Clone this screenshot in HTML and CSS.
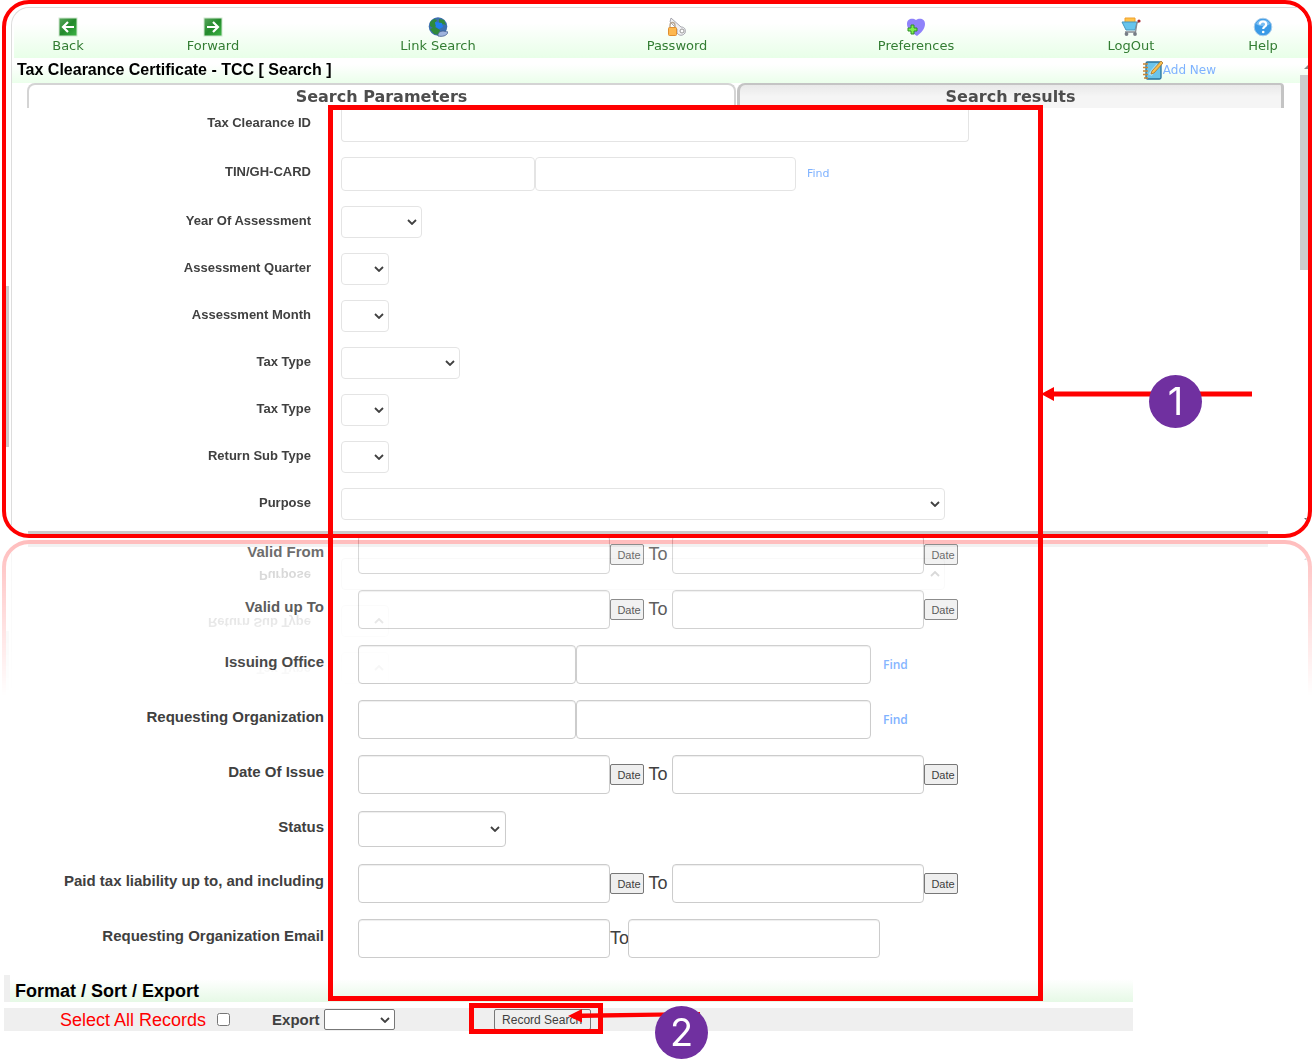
FILE: index.html
```html
<!DOCTYPE html>
<html lang="en">
<head>
<meta charset="utf-8">
<title>Tax Clearance Certificate - TCC</title>
<link rel="stylesheet" href="styles.css">
</head>
<body>
<div class="page">
  <main class="panel">
    <div class="window">
      <nav class="toolbar">
        <a href="#back">
          <svg viewBox="0 0 20 20"><defs><linearGradient id="g" x1="0" y1="0" x2="1" y2="1"><stop offset="0" stop-color="#5aa65e"/><stop offset=".5" stop-color="#238a2c"/><stop offset="1" stop-color="#3db545"/></linearGradient></defs><rect x="1" y="1" width="18" height="18" fill="url(#g)" stroke="#cfe8cf"/><path d="M16 10H5.500M10 5L5 10l5 5" fill="none" stroke="#fff" stroke-width="2.200"/></svg>
          <span>Back</span></a>
        <a href="#forward">
          <svg viewBox="0 0 20 20"><rect x="1" y="1" width="18" height="18" fill="url(#g)" stroke="#cfe8cf"/><path d="M4 10h10.500M10 5l5 5-5 5" fill="none" stroke="#fff" stroke-width="2.200"/></svg>
          <span>Forward</span></a>
        <a href="#links">
          <svg viewBox="0 0 20 20"><circle cx="10" cy="9.500" r="9.300" fill="#3c6fae"/><path d="M2 5l4-3 3 1-2 3 1 3-3 2-3-2zM11 2l5 1 2 5-3-1-2 2-2-3zM2 12l5-2 5 3-1 5-5-1z" fill="#2f8a3a"/><path d="M7 5l7 1 1 4-4 2-3-2z" fill="#1f7ff0"/><path d="M10 17c2-4 6-3 10-2-1 4-6 5-10 4z" fill="#9fb4de" stroke="#44608f" stroke-width=".8"/></svg>
          <span>Link Search</span></a>
        <a href="#password">
          <svg viewBox="0 0 20 20"><path d="M4 1l10 9c4 0 5 3 4 6-2 3-6 3-8 0V12L3 5z" fill="#f1f1f3" stroke="#a5a5ad"/><circle cx="15" cy="14" r="2" fill="#fff" stroke="#999"/><path d="M3 11V8.500c0-4 5-4 5 0V11" fill="none" stroke="#b8a793" stroke-width="1.400"/><rect x="1.500" y="10.500" width="8" height="8" rx="1" fill="#fdb84e" stroke="#df8f31"/></svg>
          <span>Password</span></a>
        <a href="#preferences">
          <svg viewBox="0 0 20 20"><path d="M11 19C5 15 1 12 1 7c0-6 6-6 9-4 3-2 9-2 9 4 0 5-4 9-8 12z" fill="#8f82fa"/><path d="M5 8h3v3h3v3H8v3H5v-3H2v-3h3z" fill="#7df04a" stroke="#2f8d29"/></svg>
          <span>Preferences</span></a>
        <a href="#logout">
          <svg viewBox="0 0 20 20"><path d="M4 1h10v5H4z" fill="#ffc24a" stroke="#f0a02d"/><path d="M1 5h15l-2 8H5z" fill="#66c4ec" stroke="#4796bd"/><path d="M18.500 4L16 6l-1.500 9H4" fill="none" stroke="#858b93" stroke-width="1.300"/><circle cx="18" cy="4" r="1.600" fill="#a8232a"/><circle cx="5.500" cy="17" r="1.900" fill="#777d86"/><circle cx="14" cy="17" r="1.900" fill="#777d86"/></svg>
          <span>LogOut</span></a>
        <a href="#help">
          <svg viewBox="0 0 20 20"><circle cx="10" cy="10" r="8.800" fill="#3a9ae6" stroke="#a9cdea"/><path d="M3 7a8 8 0 0 1 14 0c-4 3-9 3-14 0z" fill="#79bdf2"/><path d="M6.800 7.500c0-4 6.400-4 6.400 0 0 2.300-3 2.200-3 4.600" fill="none" stroke="#fff" stroke-width="2.200"/><circle cx="10.200" cy="15" r="1.300" fill="#fff"/></svg>
          <span>Help</span></a>
      </nav>
      <header class="titlebar">
        <h1>Tax Clearance Certificate - TCC [ Search ]</h1>
        <a href="#new" class="add-new">
          <svg viewBox="0 0 20 20"><rect x="3" y="2" width="15" height="17" rx="1.500" fill="#6cc4ea" stroke="#27719c" stroke-width="1.300"/><path d="M7 15c3-5 5-6 8-10" stroke="#a9def4" stroke-width="4"/><path d="M0 4h5M0 7.500h5M0 11h5M0 14.500h5M1 18h4" stroke="#c98735" stroke-width="1.700"/><path d="M18 1l2 2-9 10-3 1 1-3z" fill="#fbc04d" stroke="#a4742b" stroke-width=".8"/></svg>
          <span>Add New</span></a>
      </header>
      <div class="tabs">
        <button type="button" class="tab tab-active">Search Parameters</button>
        <button type="button" class="tab">Search results</button>
      </div>
      <form class="form form-top">
        <div class="row row-tall row-first"><label for="tcc">Tax Clearance ID</label><div class="fields"><input id="tcc" type="text" class="w-id"></div></div>
        <div class="row row-tall"><label for="tin">TIN/GH-CARD</label><div class="fields"><input id="tin" type="text" class="w-code"><input type="text" class="w-name" aria-label="Taxpayer name"><a href="#find" class="find">Find</a></div></div>
        <div class="row"><label for="year">Year Of Assessment</label><div class="fields"><select id="year" class="w-year"><option></option></select></div></div>
        <div class="row"><label for="quarter">Assessment Quarter</label><div class="fields"><select id="quarter" class="w-short"><option></option></select></div></div>
        <div class="row"><label for="month">Assessment Month</label><div class="fields"><select id="month" class="w-short"><option></option></select></div></div>
        <div class="row"><label for="type1">Tax Type</label><div class="fields"><select id="type1" class="w-type"><option></option></select></div></div>
        <div class="row"><label for="type2">Tax Type</label><div class="fields"><select id="type2" class="w-short"><option></option></select></div></div>
        <div class="row"><label for="subtype">Return Sub Type</label><div class="fields"><select id="subtype" class="w-short"><option></option></select></div></div>
        <div class="row"><label for="purpose">Purpose</label><div class="fields"><select id="purpose" class="w-purpose"><option></option></select></div></div>
      </form>
      <div class="hscroll"></div>
    </div>
    <span class="thumb thumb-left"></span>
    <span class="thumb thumb-right"></span>
    <span class="arrow-up"></span>
    <span class="arrow-down"></span>
  </main>

  <section class="lower">
    <form class="form form-bottom">
      <div class="row"><label for="from">Valid From</label><div class="fields"><input id="from" type="text" class="w-date"><button type="button" class="date">Date</button><span class="to">To</span><input type="text" class="w-date" aria-label="Valid from, end"><button type="button" class="date">Date</button></div></div>
      <div class="row"><label for="upto">Valid up To</label><div class="fields"><input id="upto" type="text" class="w-date"><button type="button" class="date">Date</button><span class="to">To</span><input type="text" class="w-date" aria-label="Valid up to, end"><button type="button" class="date">Date</button></div></div>
      <div class="row"><label for="office">Issuing Office</label><div class="fields"><input id="office" type="text" class="w-code"><input type="text" class="w-name" aria-label="Office name"><a href="#find-office" class="find">Find</a></div></div>
      <div class="row"><label for="org">Requesting Organization</label><div class="fields"><input id="org" type="text" class="w-code"><input type="text" class="w-name" aria-label="Organization name"><a href="#find-org" class="find">Find</a></div></div>
      <div class="row"><label for="issue">Date Of Issue</label><div class="fields"><input id="issue" type="text" class="w-date"><button type="button" class="date">Date</button><span class="to">To</span><input type="text" class="w-date" aria-label="Date of issue, end"><button type="button" class="date">Date</button></div></div>
      <div class="row row-status"><label for="status">Status</label><div class="fields"><select id="status" class="w-status"><option></option></select></div></div>
      <div class="row"><label for="paid">Paid tax liability up to, and including</label><div class="fields"><input id="paid" type="text" class="w-date"><button type="button" class="date">Date</button><span class="to">To</span><input type="text" class="w-date" aria-label="Paid tax liability, end"><button type="button" class="date">Date</button></div></div>
      <div class="row"><label for="email">Requesting Organization Email</label><div class="fields"><input id="email" type="text" class="w-date"><span class="to to-tight">To</span><input type="text" class="w-date" aria-label="Organization email, end"></div></div>
    </form>
    <div class="format">
      <h2>Format / Sort / Export</h2>
      <div class="export-bar">
        <label for="all" class="select-all">Select All Records</label>
        <input type="checkbox" id="all">
        <label for="export" class="export-label">Export</label>
        <select id="export"><option></option></select>
        <button type="button" class="search">Record Search</button>
      </div>
    </div>
  </section>

  <div class="frame frame-fields"></div>
  <div class="frame frame-search"></div>
  <svg class="pointer pointer-one" viewBox="0 0 212 14"><path d="M0 7L13 0v4.500h198v5H13V14z" fill="#f00"/></svg>
  <svg class="pointer pointer-two" viewBox="0 0 132 16"><path d="M0 9L14 2v4.500L132 5v4L14 11v4.500z" fill="#f00"/></svg>
  <span class="badge badge-one">1</span>
  <span class="badge badge-two">2</span>
</div>
</body>
</html>
```
FILE: styles.css
```css
* { box-sizing: border-box; }
body { margin: 0; background: #fff; color: #404040; font-family: "Liberation Sans", Arial, sans-serif; }
a { text-decoration: none; }
h1, h2 { margin: 0; color: #000; font-weight: bold; }
button, input, select { font-family: inherit; margin: 0; }
select {
  appearance: none;
  background: #fff url("data:image/svg+xml,%3Csvg xmlns='http://www.w3.org/2000/svg' width='10' height='6'%3E%3Cpath d='M1 1l4 4 4-4' fill='none' stroke='%23404040' stroke-width='1.800'/%3E%3C/svg%3E") no-repeat right 4px center;
}

.page { position: relative; padding-bottom: 32px; }

/* Upper window, with its mirror image fading out below */
.panel {
  position: relative;
  z-index: 1;
  overflow: hidden;
  margin: 0 3px 0 2px;
  padding: 3px 0 0 5px;
  border: 4px solid #f00;
  border-radius: 27px;
  background: #fff;
  -webkit-box-reflect: below 2px linear-gradient(transparent 71%, rgba(0, 0, 0, .26));
}
.window { border: solid #ddd; border-width: 1px 0 0 1px; border-top-left-radius: 18px; }

.toolbar {
  display: grid;
  grid-template-columns: 96fr 194fr 256fr 222fr 256fr 174fr 90fr;
  margin-left: 2px;
  padding: 9px 0 3px 6px;
  border-radius: 16px 16px 0 0;
  background: linear-gradient(#fff 30%, #e8ffe8);
}
.toolbar a {
  display: flex;
  flex-direction: column;
  align-items: center;
  color: #337d33;
  font: 13px/18px "DejaVu Sans", Verdana, sans-serif;
}
.toolbar svg, .add-new svg { width: 20px; height: 20px; }

.titlebar {
  display: flex;
  align-items: center;
  justify-content: space-between;
  height: 25px;
  padding: 0 92px 2px 5px;
  background: linear-gradient(#fff 25%, #ebffeb);
}
h1 { font-size: 16px; }
.add-new { display: flex; align-items: center; color: #7fb2ff; font: 12px/20px "DejaVu Sans", Verdana, sans-serif; }

.tabs { display: grid; grid-template-columns: 709fr 547fr; gap: 1px; height: 25px; margin: 0 24px 0 15px; }
.tab {
  padding: 0;
  border: 2px solid #c4c4c4;
  border-width: 2px 3px 0;
  border-radius: 8px 4px 0 0;
  background: linear-gradient(#e9e9e9, #f5f5f5 50%);
  color: #4d4d4d;
  font: bold 16px/20px "DejaVu Sans", Verdana, sans-serif;
}
.tab-active { border-color: #d4d4d4; border-width: 2px 2px 0; border-radius: 8px 8px 0 0; background: #fff; }

.form { display: flex; flex-direction: column; }
.row { display: grid; }
.row label { font-weight: bold; text-align: right; }
.fields { display: flex; align-items: center; }
.fields input, .fields select { height: 100%; padding: 0 4px; border: 1px solid #e4e4e4; border-radius: 4px; background-color: #fff; color: #404040; }

.form-top { gap: 15px; }
.form-top .row { grid-template-columns: 299px 1fr; column-gap: 30px; height: 32px; }
.form-top .row-tall { height: 34px; }
.form-top .row-first input { border-top: 0; border-radius: 0 0 4px 4px; }
.form-top label { font-size: 13px; line-height: 30px; }
.form-top .w-id { width: 628px; }
.form-top .w-code { width: 194px; }
.form-top .w-name { width: 261px; }
.form-top .w-year { width: 81px; }
.form-top .w-short { width: 48px; }
.form-top .w-type { width: 119px; }
.form-top .w-purpose { width: 604px; }
.find { margin-left: 12px; color: #7fb2ff; }
.form-top .find { margin-left: 11px; font: 11px/16px "DejaVu Sans", Verdana, sans-serif; }

.hscroll { height: 3px; margin: 11px 40px 0 16px; background: #ccc; }

.thumb { position: absolute; background: #ccc; }
.thumb-left { left: 0; top: 282px; width: 3px; height: 161px; }
.thumb-right { right: 0; top: 71px; width: 8px; height: 195px; }
.arrow-up, .arrow-down { position: absolute; right: 0; border: 4px solid transparent; border-right-width: 0; }
.arrow-up { top: 61px; border-top: 0; border-bottom-color: #888; }
.arrow-down { top: 514px; border-bottom: 0; border-top-color: #666; }

/* Rest of the form */
.lower { margin-top: -3px; }
.form-bottom { gap: 16px; }
.form-bottom .row { grid-template-columns: 324px 1fr; column-gap: 34px; height: 39px; }
.form-bottom .row-status { height: 38px; }
.form-bottom label { font-size: 15px; line-height: 34px; }
.form-bottom input, .form-bottom select { border-color: #ccc; box-shadow: inset 0 1px 1px #eee; }
.form-bottom select { background-position: right 5px center; }
.form-bottom .w-date { width: 252px; }
.form-bottom .w-code { width: 218px; }
.form-bottom .w-name { width: 295px; }
.form-bottom .w-status { width: 148px; height: 36px; }
.date { height: 21px; width: 34px; padding: 0 0 0 4px; border: 1px solid #777; border-radius: 2px; background: #efefef; color: #404040; font-size: 11px; line-height: 18px; }
.to { width: 28px; text-align: center; font-size: 18px; }
.to-tight { width: 18px; }
.form-bottom .find { color: #7fb2ff; font: 600 12px/16px "Open Sans", sans-serif; }

.format { margin: 17px 182px 0 4px; }
h2 { padding: 5px 5px 0; border-left: 6px solid #efefef; background: linear-gradient(#fff 15%, #e6f9e6); font-size: 18px; line-height: 22px; }
.export-bar { display: flex; align-items: center; height: 23px; margin-top: 6px; padding-left: 56px; background: #efefef; }
.select-all { color: #f00; font-size: 18px; line-height: 22px; }
.export-bar input { width: 13px; height: 13px; margin-left: 11px; }
.export-label { margin: 0 4px 0 42px; font-size: 15px; font-weight: bold; }
.export-bar select { width: 71px; height: 21px; border: 1px solid #777; border-radius: 2px; color: #404040; }
.search { width: 97px; height: 21px; margin-left: 99px; padding: 0; border: 1px solid #777; border-radius: 2px; background: #efefef; color: #404040; font-size: 12px; }

/* Annotations laid over the screen */
.frame, .pointer, .badge { position: absolute; z-index: 2; }
.frame { border: 5px solid #f00; pointer-events: none; }
.frame-fields { left: 328px; top: 105px; width: 715px; height: 896px; }
.frame-search { left: 469px; top: 1003px; width: 134px; height: 31px; }
.pointer-one { left: 1041px; top: 387px; width: 212px; height: 14px; }
.pointer-two { left: 568px; top: 1007px; width: 132px; height: 16px; }
.badge { width: 53px; height: 53px; border-radius: 50%; background: #7030a0; color: #fff; font: 38px/53px Inter, sans-serif; text-align: center; }
.badge-one { left: 1149px; top: 375px; }
.badge-two { left: 655px; top: 1006px; }
```
